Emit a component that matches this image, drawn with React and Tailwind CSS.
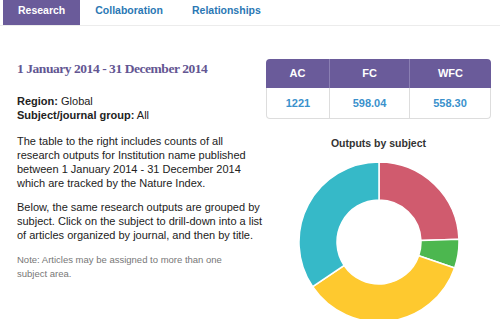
import React from "react";

const slices = [
  { from: 0, to: 88, color: "#d05b6e" },
  { from: 88, to: 109, color: "#4cb74f" },
  { from: 109, to: 236, color: "#fec92f" },
  { from: 236, to: 360, color: "#36b9c8" },
];

function point(r, deg) {
  const a = (deg * Math.PI) / 180;
  return [80 + r * Math.sin(a), 80 - r * Math.cos(a)];
}

function arcPath(from, to, outer, inner) {
  const [x1, y1] = point(outer, from);
  const [x2, y2] = point(outer, to);
  const [x3, y3] = point(inner, to);
  const [x4, y4] = point(inner, from);
  const large = to - from > 180 ? 1 : 0;
  return `M${x1} ${y1} A${outer} ${outer} 0 ${large} 1 ${x2} ${y2} L${x3} ${y3} A${inner} ${inner} 0 ${large} 0 ${x4} ${y4} Z`;
}

function Donut() {
  return (
    <svg width="162" height="162" viewBox="-1 -1 162 162">
      {slices.map((s) => (
        <path
          key={s.color}
          d={arcPath(s.from, s.to, 80, 42)}
          fill={s.color}
          stroke="#fff"
          strokeWidth="1.5"
        />
      ))}
    </svg>
  );
}

export default function App() {
  return (
    <div
      className="w-[500px] h-[319px] overflow-hidden bg-white text-[#222]"
      style={{ fontFamily: '"Liberation Sans", Arial, sans-serif' }}
    >
      <div className="flex h-[26px] border-b border-[#ececec] pl-[3px] text-[10.5px] leading-[14px] font-bold">
        <div className="pt-[3px] px-[15px] h-[25px] bg-[#6a5b9a] text-white">Research</div>
        <div className="pt-[3px] px-[15px] text-[#2a78b4]">Collaboration</div>
        <div className="pt-[3px] px-[14px] text-[#2a78b4]">Relationships</div>
      </div>

      <div className="flex pt-[33px] pl-[17px]">
        <div className="w-[249px] text-[11px] leading-[14px]">
          <h2
            className="text-[13.5px] leading-[20px] font-bold tracking-[-0.45px] text-[#635692]"
            style={{ fontFamily: '"Liberation Serif", "Times New Roman", serif' }}
          >
            1 January 2014 - 31 December 2014
          </h2>
          <p className="mt-[15px]">
            <span className="font-bold">Region:</span> Global
          </p>
          <p>
            <span className="font-bold">Subject/journal group:</span> All
          </p>
          <p className="mt-[12px]">
            The table to the right includes counts of all
            <br />
            research outputs for Institution name published
            <br />
            between 1 January 2014 - 31 December 2014
            <br />
            which are tracked by the Nature Index.
          </p>
          <p className="mt-[10px]">
            Below, the same research outputs are grouped by
            <br />
            subject. Click on the subject to drill-down into a list
            <br />
            of articles organized by journal, and then by title.
          </p>
          <p className="mt-[11px] text-[9.5px] text-[#777]">
            Note: Articles may be assigned to more than one
            <br />
            subject area.
          </p>
        </div>

        <div className="w-[225px] flex flex-col items-center">
          <table className="w-full border-separate border-spacing-0 text-center text-[11px] font-bold">
            <thead>
              <tr className="h-[29px] text-white">
                <th className="w-[64px] bg-[#6a5b9a] rounded-tl-[4px] border-r border-[#8a7fb3]">AC</th>
                <th className="w-[80px] bg-[#6a5b9a] border-r border-[#8a7fb3]">FC</th>
                <th className="bg-[#6a5b9a] rounded-tr-[4px]">WFC</th>
              </tr>
            </thead>
            <tbody>
              <tr className="h-[31px] text-[#3a91cc]">
                <td className="border-l border-b border-r border-[#ddd] rounded-bl-[4px]">1221</td>
                <td className="border-b border-r border-[#ddd]">598.04</td>
                <td className="border-b border-r border-[#ddd] rounded-br-[4px]">558.30</td>
              </tr>
            </tbody>
          </table>

          <div className="mt-[17px] text-[10.5px] font-bold text-[#333] leading-[14px]">
            Outputs by subject
          </div>
          <div className="mt-[11px]">
            <Donut />
          </div>
        </div>
      </div>
    </div>
  );
}
